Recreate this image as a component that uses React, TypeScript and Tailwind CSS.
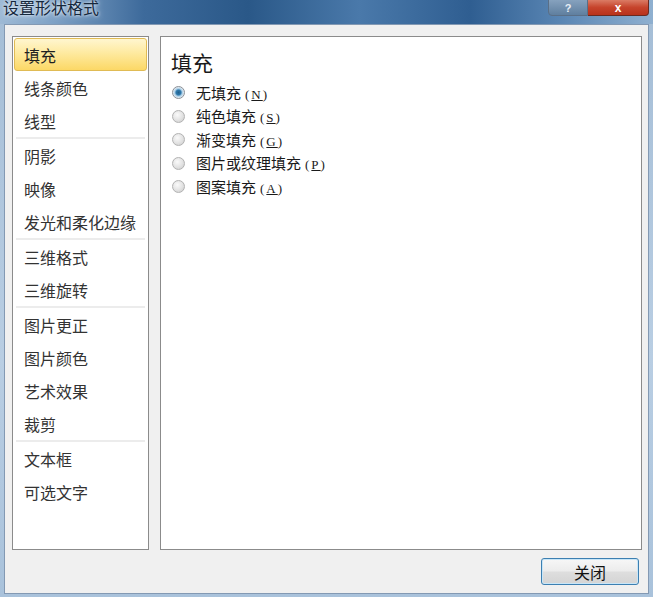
const groups = [
  ["填充", "线条颜色", "线型"],
  ["阴影", "映像", "发光和柔化边缘"],
  ["三维格式", "三维旋转"],
  ["图片更正", "图片颜色", "艺术效果", "裁剪"],
  ["文本框", "可选文字"],
];

const options = [
  { label: "无填充", key: "N", checked: true },
  { label: "纯色填充", key: "S" },
  { label: "渐变填充", key: "G" },
  { label: "图片或纹理填充", key: "P" },
  { label: "图案填充", key: "A" },
];

const cjk = { fontFamily: '"Noto Sans CJK SC", "Noto Sans", sans-serif' };

const Radio = ({ checked }: { checked?: boolean }) => (
  <span
    className={
      checked
        ? "w-[13px] h-[13px] rounded-full border border-[#8a8f96] bg-[radial-gradient(circle,#1f5f8c_0%,#2f7aad_32%,#a9cde6_48%,#e4ecf2_70%,#f4f6f8_100%)]"
        : "w-[13px] h-[13px] rounded-full border border-[#b2b2b2] bg-[radial-gradient(circle_at_40%_35%,#fafafa_0%,#e2e2e2_55%,#c9c9c9_100%)]"
    }
  />
);

export default function App() {
  return (
    <div className="w-[653px] h-[597px] flex flex-col overflow-hidden bg-[linear-gradient(180deg,#a4bdd6_0%,#b9cee3_60%,#a9c2db_100%)]" style={cjk}>
      {/* title bar */}
      <div className="h-[24px] shrink-0 flex items-start justify-between bg-[linear-gradient(90deg,#9db9d5_0%,#7fa2c6_8%,#3d6a9b_22%,#2a5888_38%,#4a79aa_55%,#2f5e91_72%,#5a86b4_86%,#8fb0d0_100%)]">
        <span className="-mt-[3px] pl-[3px] text-[16px] leading-[20px] text-[#16283d] [text-shadow:0_0_6px_#dfeaf5,0_0_3px_#eef4fa]">
          设置形状格式
        </span>
        <div className="flex mr-[4px] -mt-[3px]">
          <div className="w-[40px] h-[19px] rounded-bl-[4px] border border-[#5a6f87] bg-[linear-gradient(180deg,#8ba6c2,#5f7f9f)] flex items-end justify-center pb-[1px]">
            <span className="text-[11px] leading-none font-bold text-[#e8eef5]" style={{ fontFamily: '"Liberation Sans", sans-serif' }}>?</span>
          </div>
          <div className="w-[61px] h-[19px] rounded-br-[4px] border border-l-0 border-[#6b2a20] bg-[linear-gradient(180deg,#e08a74,#c6442c_55%,#b8321c)] flex items-end justify-center pb-[1px]">
            <span className="text-[12px] leading-none font-bold text-white" style={{ fontFamily: '"Liberation Sans", sans-serif' }}>x</span>
          </div>
        </div>
      </div>

      {/* body */}
      <div className="flex-1 mx-[4px] mb-[3px] border border-[#8399b3] bg-[#f0f0f0] flex flex-col">
        <div className="flex gap-[11px] pl-[7px] pr-[6px] pt-[11px]">
          <div className="w-[137px] h-[514px] border border-[#8b8b8b] bg-white p-[1px]">
            {groups.map((g, gi) => (
              <div key={gi}>
                {gi > 0 && <div className="mx-[2px] h-[2px] bg-[#ececec]" />}
                {g.map((item) => (
                  <div
                    key={item}
                    className={
                      item === "填充"
                        ? "h-[33px] flex items-center pl-[9px] rounded-[3px] border border-[#e0bb55] bg-[linear-gradient(180deg,#fff6cf_0%,#feeaa0_45%,#fcd866_100%)] text-[16px] text-[#1f1f1f]"
                        : "h-[33px] flex items-center pl-[10px] text-[16px] text-[#333]"
                    }
                  >
                    {item}
                  </div>
                ))}
              </div>
            ))}
          </div>

          <div className="flex-1 h-[514px] border border-[#8b8b8b] bg-white pl-[10px] pt-[11px]">
            <div className="text-[21px] leading-[28px] text-[#1a1a1a]">填充</div>
            <div className="mt-[5px]">
              {options.map((o) => (
                <div key={o.key} className="h-[23.5px] flex items-center gap-[11px] pl-[1px]">
                  <Radio checked={o.checked} />
                  <span className="text-[15px] text-[#1a1a1a]">
                    {o.label}
                    <span className="ml-[4px] text-[13px] tracking-[2px]" style={{ fontFamily: '"Liberation Serif", serif' }}>
                      (<span className="underline">{o.key}</span>)
                    </span>
                  </span>
                </div>
              ))}
            </div>
          </div>
        </div>

        <div className="flex justify-end pr-[9px] pt-[8px]">
          <button className="w-[98px] h-[27px] rounded-[3px] border border-[#3c7fb1] bg-[linear-gradient(180deg,#f7f7f7_0%,#ececec_48%,#dedede_52%,#d4d4d4_100%)] shadow-[inset_0_0_0_1px_#c8e6f8] text-[16px] text-[#111] flex items-center justify-center">
            关闭
          </button>
        </div>
      </div>
    </div>
  );
}
